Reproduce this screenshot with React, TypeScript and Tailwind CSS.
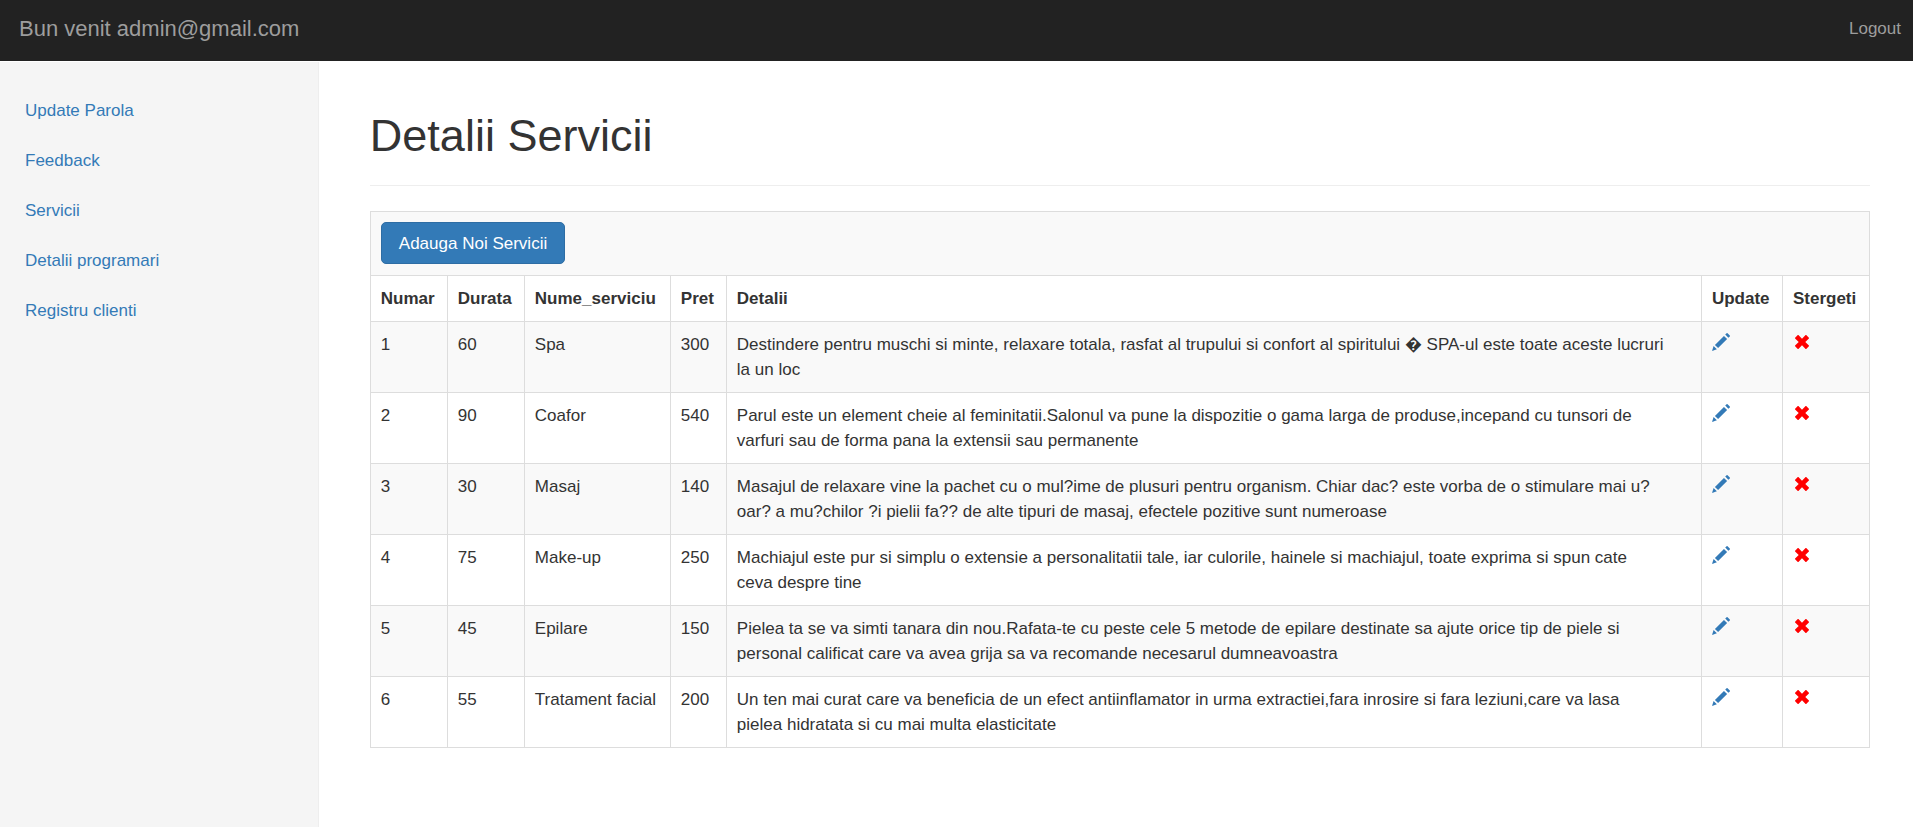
const links = ["Update Parola", "Feedback", "Servicii", "Detalii programari", "Registru clienti"];

const services = [
  {
    id: 1,
    duration: 60,
    name: "Spa",
    price: 300,
    details:
      "Destindere pentru muschi si minte, relaxare totala, rasfat al trupului si confort al spiritului \uFFFD SPA-ul este toate aceste lucruri\nla un loc",
  },
  {
    id: 2,
    duration: 90,
    name: "Coafor",
    price: 540,
    details:
      "Parul este un element cheie al feminitatii.Salonul va pune la dispozitie o gama larga de produse,incepand cu tunsori de\nvarfuri sau de forma pana la extensii sau permanente",
  },
  {
    id: 3,
    duration: 30,
    name: "Masaj",
    price: 140,
    details:
      "Masajul de relaxare vine la pachet cu o mul?ime de plusuri pentru organism. Chiar dac? este vorba de o stimulare mai u?\noar? a mu?chilor ?i pielii fa?? de alte tipuri de masaj, efectele pozitive sunt numeroase",
  },
  {
    id: 4,
    duration: 75,
    name: "Make-up",
    price: 250,
    details:
      "Machiajul este pur si simplu o extensie a personalitatii tale, iar culorile, hainele si machiajul, toate exprima si spun cate\nceva despre tine",
  },
  {
    id: 5,
    duration: 45,
    name: "Epilare",
    price: 150,
    details:
      "Pielea ta se va simti tanara din nou.Rafata-te cu peste cele 5 metode de epilare destinate sa ajute orice tip de piele si\npersonal calificat care va avea grija sa va recomande necesarul dumneavoastra",
  },
  {
    id: 6,
    duration: 55,
    name: "Tratament facial",
    price: 200,
    details:
      "Un ten mai curat care va beneficia de un efect antiinflamator in urma extractiei,fara inrosire si fara leziuni,care va lasa\npielea hidratata si cu mai multa elasticitate",
  },
];

function PencilIcon() {
  return (
    <svg className="size-[18px]" viewBox="-16 -1210 1226 1226" fill="currentColor" aria-hidden="true">
      <path
        transform="scale(1,-1)"
        d="M1011 1210q19 0 33 -13l153 -153q13 -14 13 -33t-13 -33l-99 -92l-214 214l95 96q13 14 32 14zM1013 800l-615 -614l-214 214l614 614zM317 96l-333 -112l110 335z"
      />
    </svg>
  );
}

function RemoveIcon() {
  return (
    <svg className="size-[18px]" viewBox="0 0 18 18" fill="currentColor" aria-hidden="true">
      <path d="M5.4 2.1 9 5.7l3.6-3.6q.3-.3.6 0l2.7 2.7q.3.3 0 .6L12.3 9l3.6 3.6q.3.3 0 .6l-2.7 2.7q-.3.3-.6 0L9 12.3l-3.6 3.6q-.3.3-.6 0l-2.7-2.7q-.3-.3 0-.6L5.7 9 2.1 5.4q-.3-.3 0-.6l2.7-2.7q.3-.3.6 0z" />
    </svg>
  );
}

const cell = "border border-[#ddd] p-[10px] text-left align-top";

export default function App() {
  return (
    <div className="flex min-h-screen flex-col bg-white font-['Liberation_Sans',Arial,sans-serif] text-[17px] leading-[25px] text-[#333]">
      <header className="flex h-[61px] items-center justify-between bg-[#222] pr-3 pb-1 pl-[19px] text-[#9d9d9d]">
        <a href="#" className="text-[22px]">
          Bun venit admin@gmail.com
        </a>
        <a href="#">Logout</a>
      </header>

      <div className="mt-px flex flex-1">
        <nav className="w-1/6 shrink-0 border-r border-[#eee] bg-[#f5f5f5] py-6">
          <ul>
            {links.map((label) => (
              <li key={label}>
                <a href="#" className="block px-[25px] py-3 leading-[26px] text-[#337ab7]">
                  {label}
                </a>
              </li>
            ))}
          </ul>
        </nav>

        <main className="min-w-0 flex-1 pt-12 pr-[43px] pb-10 pl-[51px]">
          <h1 className="mb-[25px] border-b border-[#eee] pb-6 text-[45px] leading-[51px] text-[#333]">
            Detalii Servicii
          </h1>

          <table className="w-full table-fixed border-collapse">
            <colgroup>
              <col className="w-[77px]" />
              <col className="w-[77px]" />
              <col className="w-[146px]" />
              <col className="w-[56px]" />
              <col />
              <col className="w-[81px]" />
              <col className="w-[87px]" />
            </colgroup>
            <thead>
              <tr className="h-16 bg-[#f9f9f9]">
                <td colSpan={7} className={cell}>
                  <button
                    type="button"
                    className="block h-[42px] rounded-[5px] border border-[#2e6da4] bg-[#337ab7] px-[17px] text-white"
                  >
                    Adauga Noi Servicii
                  </button>
                </td>
              </tr>
              <tr>
                <th className={cell}>Numar</th>
                <th className={cell}>Durata</th>
                <th className={cell}>Nume_serviciu</th>
                <th className={cell}>Pret</th>
                <th className={cell}>Detalii</th>
                <th className={cell}>Update</th>
                <th className={cell}>Stergeti</th>
              </tr>
            </thead>
            <tbody>
              {services.map((service) => (
                <tr key={service.id} className="odd:bg-[#f9f9f9]">
                  <td className={cell}>{service.id}</td>
                  <td className={cell}>{service.duration}</td>
                  <td className={cell}>{service.name}</td>
                  <td className={cell}>{service.price}</td>
                  <td className={`${cell} whitespace-pre-line`}>{service.details}</td>
                  <td className={cell}>
                    <a href="#" aria-label={`Update ${service.name}`} className="inline-block pt-px text-[#337ab7]">
                      <PencilIcon />
                    </a>
                  </td>
                  <td className={cell}>
                    <a href="#" aria-label={`Stergeti ${service.name}`} className="inline-block pt-px text-[#f00]">
                      <RemoveIcon />
                    </a>
                  </td>
                </tr>
              ))}
            </tbody>
          </table>
        </main>
      </div>
    </div>
  );
}
